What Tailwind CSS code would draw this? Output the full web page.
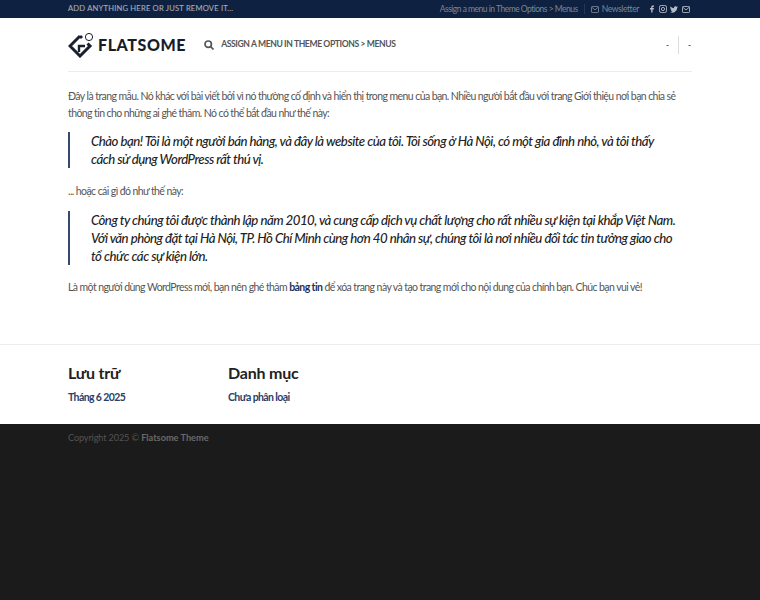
<!DOCTYPE html>
<html lang="vi">
<head>
    <meta charset="UTF-8">
    <title>Flatsome</title>
    <script src="https://cdn.jsdelivr.net/npm/@tailwindcss/browser@4"></script>
</head>
<body class="bg-white min-h-[600px] flex flex-col font-['Lato','Noto_Sans',sans-serif] text-[#555]">
    <div class="bg-[#0f2140] h-[18px] flex items-center justify-between px-[68px] text-white/45">
        <div class="text-white/65 text-[7.6px] tracking-[0.2px] uppercase">Add anything here or just remove it...</div>
        <div class="flex items-center mr-[2px]">
            <span class="text-[8.5px] tracking-[-0.5px]">Assign a menu in Theme Options &gt; Menus</span>
            <span class="w-px h-[10px] bg-white/10 ml-[6px] mr-[6px]"></span>
            <svg class="w-[8px] h-[7px] mr-[3px]" viewBox="0 0 9 8" fill="none" stroke="currentColor"><rect x="0.5" y="0.5" width="8" height="7" rx="1"/><path d="M1 1.500l3.500 3 3.500-3"/></svg>
            <span class="text-[8.5px] tracking-[-0.4px]">Newsletter</span>
            <div class="flex items-center gap-[3px] ml-[11px] text-white/70">
                <svg class="w-[4px] h-[8px]" viewBox="0 0 5 9" fill="currentColor"><path d="M1.500 9V5H0V3.400h1.500V2.200C1.500.7 2.300 0 3.600 0H5v1.600H4c-.6 0-.8.3-.8.8v1h1.700L4.700 5H3.200v4z"/></svg>
                <svg class="w-[8px] h-[8px] ml-[2px]" viewBox="0 0 9 9" fill="none" stroke="currentColor"><rect x="0.5" y="0.5" width="8" height="8" rx="2"/><circle cx="4.500" cy="4.500" r="1.800"/></svg>
                <svg class="w-[8px] h-[7px]" viewBox="0 0 24 20" fill="currentColor"><path d="M24 2.400a9.800 9.800 0 0 1-2.800.8 4.900 4.900 0 0 0 2.200-2.700 9.800 9.800 0 0 1-3.100 1.200A4.900 4.900 0 0 0 11.900 6.200 14 14 0 0 1 1.700.9a4.900 4.900 0 0 0 1.500 6.600 4.900 4.900 0 0 1-2.200-.6 4.900 4.900 0 0 0 3.900 4.900 4.900 4.900 0 0 1-2.200.1 4.900 4.900 0 0 0 4.600 3.400A9.900 9.900 0 0 1 0 17.300 14 14 0 0 0 21.500 4.900 9.900 9.900 0 0 0 24 2.400z"/></svg>
                <svg class="w-[8px] h-[7px] ml-[1px]" viewBox="0 0 9 8" fill="none" stroke="currentColor"><rect x="0.5" y="0.5" width="8" height="7" rx="1"/><path d="M1 1.500l3.500 3 3.500-3"/></svg>
            </div>
        </div>
    </div>

    <header class="mx-[68px] h-[54px] border-b border-[#ececec] flex items-center">
        <svg class="w-[26px] h-[26px] mr-[4px] text-[#1a2030]" viewBox="0 0 26 26" fill="none" stroke="currentColor" stroke-width="3">
            <path d="M12 4L2 14l10 10 10-10-2.500-2.500"/>
            <path d="M12 4l2 2"/>
            <path d="M11 20v-6h6" stroke-width="2.400"/>
            <circle cx="21" cy="5" r="3.600" stroke-width="1"/>
        </svg>
        <span class="text-[16px] leading-none font-black tracking-[0.6px] text-[#171c2a]">FLATSOME</span>
        <svg class="w-[10px] h-[10px] ml-[18px] text-[#555]" viewBox="0 0 10 10" fill="none" stroke="currentColor" stroke-width="1.700"><circle cx="4.200" cy="4.200" r="3.200"/><path d="M6.700 6.700L9.500 9.500"/></svg>
        <span class="ml-[7px] text-[8.6px] tracking-[-0.4px] font-bold text-[#555] uppercase">Assign a menu in Theme Options &gt; Menus</span>
        <div class="ml-auto flex items-center text-[#444] font-bold text-[8px]">
            <span>-</span>
            <span class="w-px h-[18px] bg-[#ddd] mx-[9px]"></span>
            <span class="mr-[1px]">-</span>
        </div>
    </header>

    <main class="px-[68px] pt-[16px] h-[272px] text-[10.5px] tracking-[-0.58px] leading-[17px]">
        <p>Đây là trang mẫu. Nó khác với bài viết bởi vì nó thường cố định và hiển thị trong menu của bạn. Nhiều người bắt đầu với trang Giới thiệu nơi bạn chia sẻ thông tin cho những ai ghé thăm. Nó có thể bắt đầu như thế này:</p>
        <blockquote class="mt-[10px] border-l-2 border-[#344a6e] pl-[21px] pr-[15px] text-[13.2px] tracking-[-0.5px] leading-[18px] italic font-medium text-[#222]">Chào bạn! Tôi là một người bán hàng, và đây là website của tôi. Tôi sống ở Hà Nội, có một gia đình nhỏ, và tôi thấy cách sử dụng WordPress rất thú vị.</blockquote>
        <p class="mt-[15px]">... hoặc cái gì đó như thế này:</p>
        <blockquote class="mt-[11px] border-l-2 border-[#344a6e] pl-[21px] pr-[15px] text-[13.2px] tracking-[-0.5px] leading-[18px] italic font-medium text-[#222]">Công ty chúng tôi được thành lập năm 2010, và cung cấp dịch vụ chất lượng cho rất nhiều sự kiện tại khắp Việt Nam. Với văn phòng đặt tại Hà Nội, TP. Hồ Chí Minh cùng hơn 40 nhân sự, chúng tôi là nơi nhiều đối tác tin tưởng giao cho tổ chức các sự kiện lớn.</blockquote>
        <p class="mt-[14px]">Là một người dùng WordPress mới, bạn nên ghé thăm <a class="font-bold text-[#1d3157]">bảng tin</a> để xóa trang này và tạo trang mới cho nội dung của chính bạn. Chúc bạn vui vẻ!</p>
    </main>

    <section class="border-t border-[#ececec] h-[80px] px-[68px] pt-[17px] flex">
        <div class="w-[160px]">
            <h3 class="text-[16px] tracking-[-0.2px] leading-[22px] font-bold text-[#222]">Lưu trữ</h3>
            <a class="block mt-[5px] text-[10.5px] tracking-[-0.6px] leading-[17px] font-bold text-[#2a4068]">Tháng 6 2025</a>
        </div>
        <div>
            <h3 class="text-[16px] tracking-[-0.2px] leading-[22px] font-bold text-[#222]">Danh mục</h3>
            <a class="block mt-[5px] text-[10.5px] tracking-[-0.6px] leading-[17px] font-bold text-[#2a4068]">Chưa phân loại</a>
        </div>
    </section>

    <footer class="flex-1 bg-[#1b1b1b] px-[68px] pt-[5px] text-[9.2px] leading-[17px] tracking-[-0.15px] text-white/25">
        Copyright 2025 © <strong class="font-bold tracking-[0px] text-white/35">Flatsome Theme</strong>
    </footer>
</body>
</html>
